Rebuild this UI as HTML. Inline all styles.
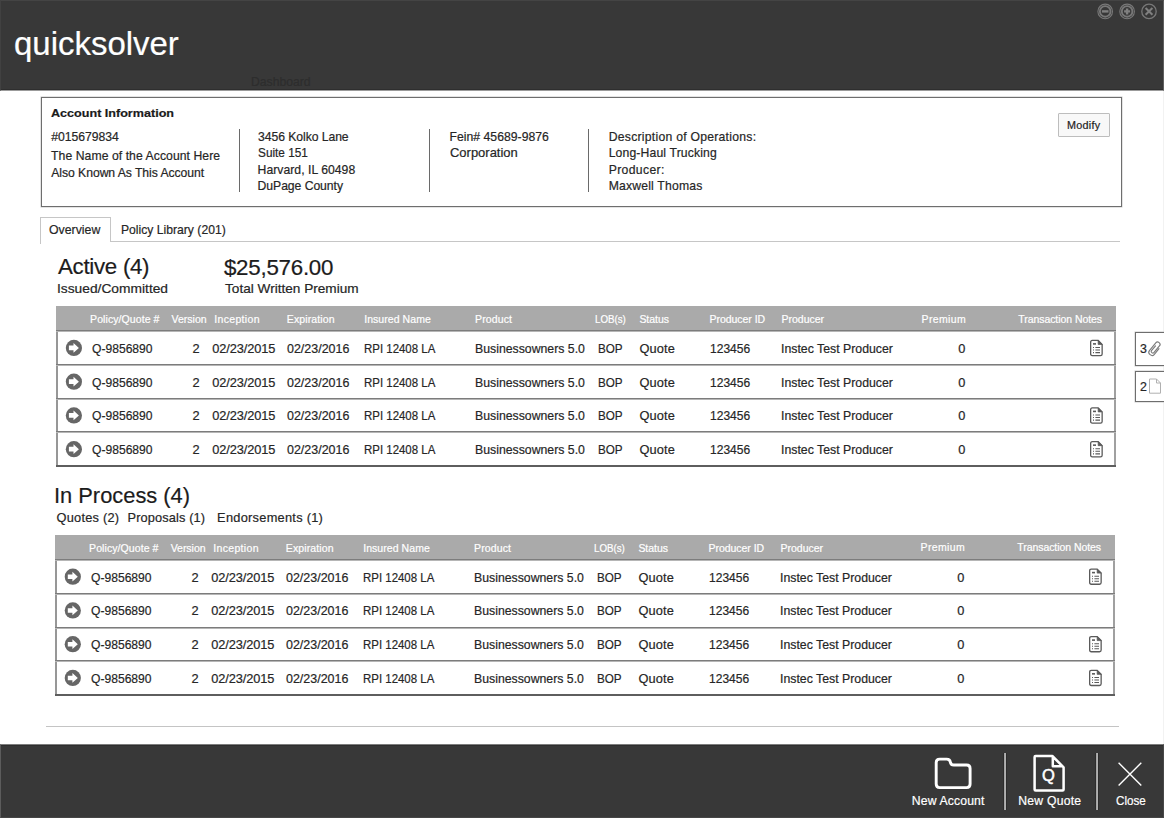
<!DOCTYPE html>
<html lang="en"><head><meta charset="utf-8"><title>quicksolver</title>
<style>
html,body{margin:0;padding:0;}
html{width:1164px;height:818px;overflow:hidden;background:#fff;}
body{width:1164px;height:818px;position:relative;overflow:hidden;background:#fff;font-family:"Liberation Sans",sans-serif;}
.t{position:absolute;white-space:nowrap;line-height:1;font-family:"Liberation Sans",sans-serif;-webkit-text-stroke:0.2px currentColor;transform-origin:0 0;}
.a{position:absolute;}
#hdr{left:0;top:0;width:1164px;height:91px;background:#383838;box-sizing:border-box;border-top:1px solid #444;border-left:1px solid #414141;border-right:1px solid #606060;border-bottom:1px solid #9b9b9b;box-shadow:inset 0 -1px 0 #2e2e2e;}
#ftr{left:0;top:744px;width:1164px;height:74px;background:#383838;box-sizing:border-box;border-top:1px solid #7d7d7d;border-right:1px solid #484848;border-left:1px solid #5c5c5c;border-bottom:1px solid #464646;box-shadow:inset 0 1px 0 #2e2e2e;}
#redge{left:1163px;top:91px;width:1px;height:653px;background:#f2f2f2;}
#acct{left:41px;top:97px;width:1081px;height:110px;box-sizing:border-box;border:1px solid #6e6e6e;box-shadow:0 0 0 0.5px #c9c9c9;}
.vs{width:1px;background:#6a6a6a;top:129px;height:63px;}
#mod{left:1058px;top:113px;width:52px;height:24px;box-sizing:border-box;border:1px solid #bdbdbd;background:#f8f8f8;border-radius:1px;}
#tabline{left:110px;top:241px;width:1010px;height:1px;background:#c6c6c6;}
#tab{left:40px;top:217px;width:71px;height:27px;box-sizing:border-box;border-left:1px solid #c6c6c6;border-top:1px solid #c6c6c6;}
#tabr{left:110px;top:217px;width:1px;height:25px;background:#c6c6c6;}
.tbl{left:56px;width:1060px;}
.th{left:0;top:0;width:1060px;height:24px;background:#aaa;}
.tb{left:0;top:24px;width:1060px;height:136px;box-sizing:border-box;border-left:2px solid #979797;border-right:2px solid #a0a0a0;}
.rl{left:0;width:1060px;height:2px;background:linear-gradient(#7c7c7c 0 50%,#b6b6b6 50% 100%);}
.sb{left:1135px;width:29px;box-sizing:border-box;border:1px solid #6e6e6e;border-right:none;box-shadow:0 0 0 0.5px #ccc;background:#fff;}
#hr{left:46px;top:726px;width:1073px;height:1px;background:#c4c4c4;}
.fs{width:4px;top:753px;height:57px;background:linear-gradient(90deg,#2c2c2c 0 25%,#a4a4a4 25% 50%,#b0b0b0 50% 75%,#2c2c2c 75% 100%);}
svg{position:absolute;overflow:visible;}

</style></head>
<body>
<div class="a" id="hdr"></div>
<svg style="left:1096px;top:3px" width="62" height="18" viewBox="1096 3 62 18">
 <g fill="none" stroke="#787878">
  <circle cx="1105.2" cy="11.4" r="7.3" stroke-width="1.1"/><circle cx="1105.2" cy="11.4" r="5.3" stroke-width="1.9"/>
  <circle cx="1127.1" cy="11.4" r="7.3" stroke-width="1.1"/><circle cx="1127.1" cy="11.4" r="5.3" stroke-width="1.9"/>
  <circle cx="1149" cy="11.4" r="7.2" stroke-width="1.3"/>
 </g>
 <g stroke="#808080" fill="none">
  <path d="M1101.9 11.4H1108.5" stroke-width="2.4"/>
  <path d="M1124.1 11.4H1130.1M1127.1 8.4V14.4" stroke-width="2.4"/>
  <path d="M1145.6 8L1152.4 14.8M1152.4 8L1145.6 14.8" stroke-width="2"/>
 </g>
</svg>
<div class="a" id="acct"></div>
<div class="a vs" style="left:239px"></div>
<div class="a vs" style="left:429px"></div>
<div class="a vs" style="left:588px"></div>
<div class="a" id="mod"></div>
<div class="a" id="tabline"></div>
<div class="a" id="tab"></div><div class="a" id="tabr"></div>

<!-- table 1 -->
<div class="a tbl" style="top:306px;height:162px">
 <div class="a th"></div>
 <div class="a tb"></div>
 <div class="a rl" style="top:24px"></div>
 <div class="a rl" style="top:58px"></div>
 <div class="a rl" style="top:92px"></div>
 <div class="a rl" style="top:125px"></div>
 <div class="a rl" style="top:159px;background:#5e5e5e"></div>
</div>
<!-- table 2 -->
<div class="a tbl" style="left:55px;top:535px;height:162px">
 <div class="a th"></div>
 <div class="a tb"></div>
 <div class="a rl" style="top:24px"></div>
 <div class="a rl" style="top:58px"></div>
 <div class="a rl" style="top:92px"></div>
 <div class="a rl" style="top:125px"></div>
 <div class="a rl" style="top:159px;background:#5e5e5e"></div>
</div>

<svg style="left:0;top:0" width="1164" height="818" viewBox="0 0 1164 818">
 <g transform="translate(73.9 347.90)"><circle cx="0" cy="0" r="8.1" fill="#666"/><path d="M-5 -2.3H-0.4V-4.9L5 0L-0.4 4.9V2.3H-5Z" fill="#fff"/></g>
 <g transform="translate(73.9 381.65)"><circle cx="0" cy="0" r="8.1" fill="#666"/><path d="M-5 -2.3H-0.4V-4.9L5 0L-0.4 4.9V2.3H-5Z" fill="#fff"/></g>
 <g transform="translate(73.9 415.40)"><circle cx="0" cy="0" r="8.1" fill="#666"/><path d="M-5 -2.3H-0.4V-4.9L5 0L-0.4 4.9V2.3H-5Z" fill="#fff"/></g>
 <g transform="translate(73.9 449.15)"><circle cx="0" cy="0" r="8.1" fill="#666"/><path d="M-5 -2.3H-0.4V-4.9L5 0L-0.4 4.9V2.3H-5Z" fill="#fff"/></g>
 <g transform="translate(72.8 576.70)"><circle cx="0" cy="0" r="8.1" fill="#666"/><path d="M-5 -2.3H-0.4V-4.9L5 0L-0.4 4.9V2.3H-5Z" fill="#fff"/></g>
 <g transform="translate(72.8 610.45)"><circle cx="0" cy="0" r="8.1" fill="#666"/><path d="M-5 -2.3H-0.4V-4.9L5 0L-0.4 4.9V2.3H-5Z" fill="#fff"/></g>
 <g transform="translate(72.8 644.20)"><circle cx="0" cy="0" r="8.1" fill="#666"/><path d="M-5 -2.3H-0.4V-4.9L5 0L-0.4 4.9V2.3H-5Z" fill="#fff"/></g>
 <g transform="translate(72.8 677.95)"><circle cx="0" cy="0" r="8.1" fill="#666"/><path d="M-5 -2.3H-0.4V-4.9L5 0L-0.4 4.9V2.3H-5Z" fill="#fff"/></g>
 <g transform="translate(1090 339.80)" fill="none" stroke="#5a5a5a" stroke-width="1.3"><path d="M2.3 0.65H8.2L12.15 4.6V14.1Q12.15 15.75 10.5 15.75H2.3Q0.65 15.75 0.65 14.1V2.3Q0.65 0.65 2.3 0.65Z"/><path d="M8.2 0.65V4.6H12.15Z" fill="#5a5a5a" stroke-width="0.8"/><path d="M3 4.1H6" stroke-width="1.6"/><path d="M5.4 7.7H10M5.4 10.2H10M5.4 12.8H10" stroke-width="1.1"/><path d="M3 7.7H4M3 10.2H4M3 12.8H4" stroke-width="1.1"/></g>
 <g transform="translate(1090 407.30)" fill="none" stroke="#5a5a5a" stroke-width="1.3"><path d="M2.3 0.65H8.2L12.15 4.6V14.1Q12.15 15.75 10.5 15.75H2.3Q0.65 15.75 0.65 14.1V2.3Q0.65 0.65 2.3 0.65Z"/><path d="M8.2 0.65V4.6H12.15Z" fill="#5a5a5a" stroke-width="0.8"/><path d="M3 4.1H6" stroke-width="1.6"/><path d="M5.4 7.7H10M5.4 10.2H10M5.4 12.8H10" stroke-width="1.1"/><path d="M3 7.7H4M3 10.2H4M3 12.8H4" stroke-width="1.1"/></g>
 <g transform="translate(1090 441.05)" fill="none" stroke="#5a5a5a" stroke-width="1.3"><path d="M2.3 0.65H8.2L12.15 4.6V14.1Q12.15 15.75 10.5 15.75H2.3Q0.65 15.75 0.65 14.1V2.3Q0.65 0.65 2.3 0.65Z"/><path d="M8.2 0.65V4.6H12.15Z" fill="#5a5a5a" stroke-width="0.8"/><path d="M3 4.1H6" stroke-width="1.6"/><path d="M5.4 7.7H10M5.4 10.2H10M5.4 12.8H10" stroke-width="1.1"/><path d="M3 7.7H4M3 10.2H4M3 12.8H4" stroke-width="1.1"/></g>
 <g transform="translate(1089 568.50)" fill="none" stroke="#5a5a5a" stroke-width="1.3"><path d="M2.3 0.65H8.2L12.15 4.6V14.1Q12.15 15.75 10.5 15.75H2.3Q0.65 15.75 0.65 14.1V2.3Q0.65 0.65 2.3 0.65Z"/><path d="M8.2 0.65V4.6H12.15Z" fill="#5a5a5a" stroke-width="0.8"/><path d="M3 4.1H6" stroke-width="1.6"/><path d="M5.4 7.7H10M5.4 10.2H10M5.4 12.8H10" stroke-width="1.1"/><path d="M3 7.7H4M3 10.2H4M3 12.8H4" stroke-width="1.1"/></g>
 <g transform="translate(1089 636.00)" fill="none" stroke="#5a5a5a" stroke-width="1.3"><path d="M2.3 0.65H8.2L12.15 4.6V14.1Q12.15 15.75 10.5 15.75H2.3Q0.65 15.75 0.65 14.1V2.3Q0.65 0.65 2.3 0.65Z"/><path d="M8.2 0.65V4.6H12.15Z" fill="#5a5a5a" stroke-width="0.8"/><path d="M3 4.1H6" stroke-width="1.6"/><path d="M5.4 7.7H10M5.4 10.2H10M5.4 12.8H10" stroke-width="1.1"/><path d="M3 7.7H4M3 10.2H4M3 12.8H4" stroke-width="1.1"/></g>
 <g transform="translate(1089 669.75)" fill="none" stroke="#5a5a5a" stroke-width="1.3"><path d="M2.3 0.65H8.2L12.15 4.6V14.1Q12.15 15.75 10.5 15.75H2.3Q0.65 15.75 0.65 14.1V2.3Q0.65 0.65 2.3 0.65Z"/><path d="M8.2 0.65V4.6H12.15Z" fill="#5a5a5a" stroke-width="0.8"/><path d="M3 4.1H6" stroke-width="1.6"/><path d="M5.4 7.7H10M5.4 10.2H10M5.4 12.8H10" stroke-width="1.1"/><path d="M3 7.7H4M3 10.2H4M3 12.8H4" stroke-width="1.1"/></g>
</svg>

<div class="a" id="redge"></div>
<div class="a sb" style="top:332px;height:34px"></div>
<div class="a sb" style="top:371px;height:31px"></div>
<svg style="left:1146px;top:338px" width="18" height="22" viewBox="1146 338 18 22">
 <g transform="translate(1154.9 348.8) rotate(-50.4) scale(1.04 1.18)">
  <path d="M2.6 2.6L-4.7 2.6A2.6 2.6 0 0 1 -4.7 -2.6L5.2 -2.6A2 2 0 0 1 5.2 1.4L-3.5 1.4A1.3 1.3 0 0 1 -3.5 -1.2L2.6 -1.2" fill="none" stroke="#7c7c7c" stroke-width="1" stroke-linecap="round"/>
 </g>
</svg>
<svg style="left:1148px;top:377px" width="16" height="18" viewBox="1148 377 16 18">
 <path d="M1149.5 379H1156.5L1160.5 383V393.2H1149.5ZM1156.5 379V383H1160.5" fill="none" stroke="#b0b0b0" stroke-width="1"/>
</svg>

<div class="a" id="hr"></div>
<div class="a" id="ftr"></div>
<div class="a fs" style="left:1003px"></div>
<div class="a fs" style="left:1095px"></div>
<svg style="left:900px;top:744px" width="264" height="74" viewBox="900 744 264 74">
 <g fill="none" stroke="#fff" stroke-width="2.2" stroke-linejoin="round">
  <path d="M939.7 759.1H946.6Q949.9 759.1 950.3 762Q950.7 765 953.8 765H966.6Q970.1 765 970.1 768.5V784.1Q970.1 787.6 966.6 787.6H939.7Q936.2 787.6 936.2 784.1V762.6Q936.2 759.1 939.7 759.1Z" stroke-width="2.9"/>
  <path d="M1036 756H1052.3L1063.6 767.3V789.5Q1063.6 790.5 1062.6 790.5H1035.6Q1034.6 790.5 1034.6 789.5V757Q1034.6 756 1035.6 756Z M1052.8 756.5V766.3H1063" stroke-width="2.5"/>
 </g>
 <path d="M1118.6 762.8L1141.3 785.4M1141.3 762.8L1118.6 785.4" stroke="#fff" stroke-width="1.4" fill="none"/>
</svg>

<div class="t" id="t0" style="left:13.6px;top:26.00px;font-size:34px;color:#fff;transform:scaleX(0.9691);">quicksolver</div>
<div class="t" id="t1" style="left:250.6px;top:76.00px;font-size:12.6px;color:#2d2d2d;transform:scaleX(0.9671);">Dashboard</div>
<div class="t" id="t2" style="left:51.1px;top:108.00px;font-size:11.8px;color:#1a1a1a;font-weight:700;transform:scaleX(1.0664);">Account Information</div>
<div class="t" id="t3" style="left:51.3px;top:131.00px;font-size:12.2px;color:#262626;letter-spacing:-0.031px;">#015679834</div>
<div class="t" id="t4" style="left:51.1px;top:150.00px;font-size:12.2px;color:#262626;letter-spacing:0.060px;">The Name of the Account Here</div>
<div class="t" id="t5" style="left:51.3px;top:167.00px;font-size:12.2px;color:#262626;letter-spacing:-0.056px;">Also Known As This Account</div>
<div class="t" id="t6" style="left:258.1px;top:131.00px;font-size:12.2px;color:#262626;letter-spacing:-0.067px;">3456 Kolko Lane</div>
<div class="t" id="t7" style="left:258.1px;top:147.00px;font-size:12.2px;color:#262626;transform:scaleX(0.9692);">Suite 151</div>
<div class="t" id="t8" style="left:257.6px;top:164.00px;font-size:12.2px;color:#262626;letter-spacing:0.031px;">Harvard, IL 60498</div>
<div class="t" id="t9" style="left:257.6px;top:180.00px;font-size:12.2px;color:#262626;letter-spacing:-0.054px;">DuPage County</div>
<div class="t" id="t10" style="left:449.5px;top:131.00px;font-size:12.2px;color:#262626;letter-spacing:0.031px;">Fein# 45689-9876</div>
<div class="t" id="t11" style="left:449.7px;top:147.00px;font-size:12.2px;color:#262626;transform:scaleX(1.0642);">Corporation</div>
<div class="t" id="t12" style="left:608.7px;top:131.00px;font-size:12.2px;color:#262626;letter-spacing:0.258px;">Description of Operations:</div>
<div class="t" id="t13" style="left:608.7px;top:147.00px;font-size:12.2px;color:#262626;letter-spacing:0.142px;">Long-Haul Trucking</div>
<div class="t" id="t14" style="left:608.7px;top:164.00px;font-size:12.2px;color:#262626;letter-spacing:0.357px;">Producer:</div>
<div class="t" id="t15" style="left:608.7px;top:180.00px;font-size:12.2px;color:#262626;letter-spacing:0.183px;">Maxwell Thomas</div>
<div class="t" id="t16" style="left:1067.1px;top:120.00px;font-size:10.8px;color:#222;letter-spacing:0.227px;">Modify</div>
<div class="t" id="t17" style="left:48.5px;top:224.00px;font-size:12.8px;color:#262626;transform:scaleX(0.9627);">Overview</div>
<div class="t" id="t18" style="left:120.9px;top:224.00px;font-size:12.8px;color:#262626;transform:scaleX(0.9498);">Policy Library (201)</div>
<div class="t" id="t19" style="left:58.0px;top:256.00px;font-size:22.3px;color:#1c1c1c;letter-spacing:-0.291px;">Active (4)</div>
<div class="t" id="t20" style="left:56.7px;top:283.00px;font-size:12.8px;color:#262626;transform:scaleX(1.0767);">Issued/Committed</div>
<div class="t" id="t21" style="left:223.9px;top:257.00px;font-size:22.3px;color:#1c1c1c;letter-spacing:-0.227px;">$25,576.00</div>
<div class="t" id="t22" style="left:224.5px;top:283.00px;font-size:12.8px;color:#262626;transform:scaleX(1.0638);">Total Written Premium</div>
<div class="t" id="t23" style="left:54.2px;top:485.00px;font-size:22.3px;color:#1c1c1c;transform:scaleX(0.9801);">In Process (4)</div>
<div class="t" id="t24" style="left:56.5px;top:512.00px;font-size:12.8px;color:#262626;letter-spacing:0.237px;">Quotes (2)</div>
<div class="t" id="t25" style="left:127.5px;top:512.00px;font-size:12.8px;color:#262626;letter-spacing:0.124px;">Proposals (1)</div>
<div class="t" id="t26" style="left:217.1px;top:512.00px;font-size:12.8px;color:#262626;letter-spacing:0.272px;">Endorsements (1)</div>
<div class="t" id="t27" style="left:90.1px;top:314.00px;font-size:10.5px;color:#fff;letter-spacing:0.077px;">Policy/Quote #</div>
<div class="t" id="t28" style="left:171.5px;top:314.00px;font-size:10.5px;color:#fff;letter-spacing:0.011px;">Version</div>
<div class="t" id="t29" style="left:214.3px;top:314.00px;font-size:10.5px;color:#fff;letter-spacing:0.322px;">Inception</div>
<div class="t" id="t30" style="left:286.8px;top:314.00px;font-size:10.5px;color:#fff;letter-spacing:0.116px;">Expiration</div>
<div class="t" id="t31" style="left:364.2px;top:314.00px;font-size:10.5px;color:#fff;letter-spacing:0.059px;">Insured Name</div>
<div class="t" id="t32" style="left:475.1px;top:314.00px;font-size:10.5px;color:#fff;letter-spacing:0.127px;">Product</div>
<div class="t" id="t33" style="left:594.8px;top:314.00px;font-size:10.5px;color:#fff;transform:scaleX(0.9273);">LOB(s)</div>
<div class="t" id="t34" style="left:639.4px;top:314.00px;font-size:10.5px;color:#fff;letter-spacing:-0.026px;">Status</div>
<div class="t" id="t35" style="left:709.6px;top:314.00px;font-size:10.5px;color:#fff;letter-spacing:-0.048px;">Producer ID</div>
<div class="t" id="t36" style="left:781.6px;top:314.00px;font-size:10.5px;color:#fff;letter-spacing:-0.023px;">Producer</div>
<div class="t" id="t37" style="left:921.6px;top:314.00px;font-size:10.5px;color:#fff;letter-spacing:0.347px;">Premium</div>
<div class="t" id="t38" style="left:1018.3px;top:314.00px;font-size:10.5px;color:#fff;letter-spacing:-0.067px;">Transaction Notes</div>
<div class="t" id="t39" style="left:91.9px;top:343.00px;font-size:12.8px;color:#262626;transform:scaleX(0.9456);">Q-9856890</div>
<div class="t" id="t40" style="left:192.5px;top:343.00px;font-size:12.8px;color:#262626;">2</div>
<div class="t" id="t41" style="left:212.3px;top:343.00px;font-size:12.8px;color:#262626;letter-spacing:-0.113px;">02/23/2015</div>
<div class="t" id="t42" style="left:287.2px;top:343.00px;font-size:12.8px;color:#262626;transform:scaleX(0.9742);">02/23/2016</div>
<div class="t" id="t43" style="left:364.2px;top:343.00px;font-size:12.8px;color:#262626;transform:scaleX(0.8948);">RPI 12408 LA</div>
<div class="t" id="t44" style="left:474.8px;top:343.00px;font-size:12.8px;color:#262626;transform:scaleX(0.9597);">Businessowners 5.0</div>
<div class="t" id="t45" style="left:597.6px;top:343.00px;font-size:12.8px;color:#262626;transform:scaleX(0.9124);">BOP</div>
<div class="t" id="t46" style="left:639.5px;top:343.00px;font-size:12.8px;color:#262626;letter-spacing:0.106px;">Quote</div>
<div class="t" id="t47" style="left:709.6px;top:343.00px;font-size:12.8px;color:#262626;transform:scaleX(0.9409);">123456</div>
<div class="t" id="t48" style="left:780.8px;top:343.00px;font-size:12.8px;color:#262626;transform:scaleX(0.9617);">Instec Test Producer</div>
<div class="t" id="t49" style="left:958.2px;top:343.00px;font-size:12.8px;color:#262626;">0</div>
<div class="t" id="t50" style="left:91.9px;top:377.00px;font-size:12.8px;color:#262626;transform:scaleX(0.9456);">Q-9856890</div>
<div class="t" id="t51" style="left:192.5px;top:377.00px;font-size:12.8px;color:#262626;">2</div>
<div class="t" id="t52" style="left:212.3px;top:377.00px;font-size:12.8px;color:#262626;letter-spacing:-0.113px;">02/23/2015</div>
<div class="t" id="t53" style="left:287.2px;top:377.00px;font-size:12.8px;color:#262626;transform:scaleX(0.9742);">02/23/2016</div>
<div class="t" id="t54" style="left:364.2px;top:377.00px;font-size:12.8px;color:#262626;transform:scaleX(0.8948);">RPI 12408 LA</div>
<div class="t" id="t55" style="left:474.8px;top:377.00px;font-size:12.8px;color:#262626;transform:scaleX(0.9597);">Businessowners 5.0</div>
<div class="t" id="t56" style="left:597.6px;top:377.00px;font-size:12.8px;color:#262626;transform:scaleX(0.9124);">BOP</div>
<div class="t" id="t57" style="left:639.5px;top:377.00px;font-size:12.8px;color:#262626;letter-spacing:0.106px;">Quote</div>
<div class="t" id="t58" style="left:709.6px;top:377.00px;font-size:12.8px;color:#262626;transform:scaleX(0.9409);">123456</div>
<div class="t" id="t59" style="left:780.8px;top:377.00px;font-size:12.8px;color:#262626;transform:scaleX(0.9617);">Instec Test Producer</div>
<div class="t" id="t60" style="left:958.2px;top:377.00px;font-size:12.8px;color:#262626;">0</div>
<div class="t" id="t61" style="left:91.9px;top:410.00px;font-size:12.8px;color:#262626;transform:scaleX(0.9456);">Q-9856890</div>
<div class="t" id="t62" style="left:192.5px;top:410.00px;font-size:12.8px;color:#262626;">2</div>
<div class="t" id="t63" style="left:212.3px;top:410.00px;font-size:12.8px;color:#262626;letter-spacing:-0.113px;">02/23/2015</div>
<div class="t" id="t64" style="left:287.2px;top:410.00px;font-size:12.8px;color:#262626;transform:scaleX(0.9742);">02/23/2016</div>
<div class="t" id="t65" style="left:364.2px;top:410.00px;font-size:12.8px;color:#262626;transform:scaleX(0.8948);">RPI 12408 LA</div>
<div class="t" id="t66" style="left:474.8px;top:410.00px;font-size:12.8px;color:#262626;transform:scaleX(0.9597);">Businessowners 5.0</div>
<div class="t" id="t67" style="left:597.6px;top:410.00px;font-size:12.8px;color:#262626;transform:scaleX(0.9124);">BOP</div>
<div class="t" id="t68" style="left:639.5px;top:410.00px;font-size:12.8px;color:#262626;letter-spacing:0.106px;">Quote</div>
<div class="t" id="t69" style="left:709.6px;top:410.00px;font-size:12.8px;color:#262626;transform:scaleX(0.9409);">123456</div>
<div class="t" id="t70" style="left:780.8px;top:410.00px;font-size:12.8px;color:#262626;transform:scaleX(0.9617);">Instec Test Producer</div>
<div class="t" id="t71" style="left:958.2px;top:410.00px;font-size:12.8px;color:#262626;">0</div>
<div class="t" id="t72" style="left:91.9px;top:444.00px;font-size:12.8px;color:#262626;transform:scaleX(0.9456);">Q-9856890</div>
<div class="t" id="t73" style="left:192.5px;top:444.00px;font-size:12.8px;color:#262626;">2</div>
<div class="t" id="t74" style="left:212.3px;top:444.00px;font-size:12.8px;color:#262626;letter-spacing:-0.113px;">02/23/2015</div>
<div class="t" id="t75" style="left:287.2px;top:444.00px;font-size:12.8px;color:#262626;transform:scaleX(0.9742);">02/23/2016</div>
<div class="t" id="t76" style="left:364.2px;top:444.00px;font-size:12.8px;color:#262626;transform:scaleX(0.8948);">RPI 12408 LA</div>
<div class="t" id="t77" style="left:474.8px;top:444.00px;font-size:12.8px;color:#262626;transform:scaleX(0.9597);">Businessowners 5.0</div>
<div class="t" id="t78" style="left:597.6px;top:444.00px;font-size:12.8px;color:#262626;transform:scaleX(0.9124);">BOP</div>
<div class="t" id="t79" style="left:639.5px;top:444.00px;font-size:12.8px;color:#262626;letter-spacing:0.106px;">Quote</div>
<div class="t" id="t80" style="left:709.6px;top:444.00px;font-size:12.8px;color:#262626;transform:scaleX(0.9409);">123456</div>
<div class="t" id="t81" style="left:780.8px;top:444.00px;font-size:12.8px;color:#262626;transform:scaleX(0.9617);">Instec Test Producer</div>
<div class="t" id="t82" style="left:958.2px;top:444.00px;font-size:12.8px;color:#262626;">0</div>
<div class="t" id="t83" style="left:89.1px;top:543.00px;font-size:10.5px;color:#fff;letter-spacing:0.077px;">Policy/Quote #</div>
<div class="t" id="t84" style="left:170.7px;top:543.00px;font-size:10.5px;color:#fff;letter-spacing:-0.030px;">Version</div>
<div class="t" id="t85" style="left:213.3px;top:543.00px;font-size:10.5px;color:#fff;letter-spacing:0.322px;">Inception</div>
<div class="t" id="t86" style="left:285.8px;top:543.00px;font-size:10.5px;color:#fff;letter-spacing:0.116px;">Expiration</div>
<div class="t" id="t87" style="left:363.2px;top:543.00px;font-size:10.5px;color:#fff;letter-spacing:0.059px;">Insured Name</div>
<div class="t" id="t88" style="left:474.1px;top:543.00px;font-size:10.5px;color:#fff;letter-spacing:0.127px;">Product</div>
<div class="t" id="t89" style="left:593.8px;top:543.00px;font-size:10.5px;color:#fff;transform:scaleX(0.9273);">LOB(s)</div>
<div class="t" id="t90" style="left:638.4px;top:543.00px;font-size:10.5px;color:#fff;letter-spacing:-0.026px;">Status</div>
<div class="t" id="t91" style="left:708.6px;top:543.00px;font-size:10.5px;color:#fff;letter-spacing:-0.048px;">Producer ID</div>
<div class="t" id="t92" style="left:780.6px;top:543.00px;font-size:10.5px;color:#fff;letter-spacing:-0.023px;">Producer</div>
<div class="t" id="t93" style="left:920.6px;top:542.00px;font-size:10.5px;color:#fff;letter-spacing:0.347px;">Premium</div>
<div class="t" id="t94" style="left:1017.3px;top:542.00px;font-size:10.5px;color:#fff;letter-spacing:-0.067px;">Transaction Notes</div>
<div class="t" id="t95" style="left:90.9px;top:572.00px;font-size:12.8px;color:#262626;transform:scaleX(0.9456);">Q-9856890</div>
<div class="t" id="t96" style="left:191.5px;top:572.00px;font-size:12.8px;color:#262626;">2</div>
<div class="t" id="t97" style="left:211.3px;top:572.00px;font-size:12.8px;color:#262626;letter-spacing:-0.113px;">02/23/2015</div>
<div class="t" id="t98" style="left:286.2px;top:572.00px;font-size:12.8px;color:#262626;transform:scaleX(0.9742);">02/23/2016</div>
<div class="t" id="t99" style="left:363.2px;top:572.00px;font-size:12.8px;color:#262626;transform:scaleX(0.8948);">RPI 12408 LA</div>
<div class="t" id="t100" style="left:473.8px;top:572.00px;font-size:12.8px;color:#262626;transform:scaleX(0.9597);">Businessowners 5.0</div>
<div class="t" id="t101" style="left:596.6px;top:572.00px;font-size:12.8px;color:#262626;transform:scaleX(0.9124);">BOP</div>
<div class="t" id="t102" style="left:638.5px;top:572.00px;font-size:12.8px;color:#262626;letter-spacing:0.106px;">Quote</div>
<div class="t" id="t103" style="left:708.6px;top:572.00px;font-size:12.8px;color:#262626;transform:scaleX(0.9409);">123456</div>
<div class="t" id="t104" style="left:779.8px;top:572.00px;font-size:12.8px;color:#262626;transform:scaleX(0.9617);">Instec Test Producer</div>
<div class="t" id="t105" style="left:957.2px;top:572.00px;font-size:12.8px;color:#262626;">0</div>
<div class="t" id="t106" style="left:90.9px;top:605.00px;font-size:12.8px;color:#262626;transform:scaleX(0.9456);">Q-9856890</div>
<div class="t" id="t107" style="left:191.5px;top:605.00px;font-size:12.8px;color:#262626;">2</div>
<div class="t" id="t108" style="left:211.3px;top:605.00px;font-size:12.8px;color:#262626;letter-spacing:-0.113px;">02/23/2015</div>
<div class="t" id="t109" style="left:286.2px;top:605.00px;font-size:12.8px;color:#262626;transform:scaleX(0.9742);">02/23/2016</div>
<div class="t" id="t110" style="left:363.2px;top:605.00px;font-size:12.8px;color:#262626;transform:scaleX(0.8948);">RPI 12408 LA</div>
<div class="t" id="t111" style="left:473.8px;top:605.00px;font-size:12.8px;color:#262626;transform:scaleX(0.9597);">Businessowners 5.0</div>
<div class="t" id="t112" style="left:596.6px;top:605.00px;font-size:12.8px;color:#262626;transform:scaleX(0.9124);">BOP</div>
<div class="t" id="t113" style="left:638.5px;top:605.00px;font-size:12.8px;color:#262626;letter-spacing:0.106px;">Quote</div>
<div class="t" id="t114" style="left:708.6px;top:605.00px;font-size:12.8px;color:#262626;transform:scaleX(0.9409);">123456</div>
<div class="t" id="t115" style="left:779.8px;top:605.00px;font-size:12.8px;color:#262626;transform:scaleX(0.9617);">Instec Test Producer</div>
<div class="t" id="t116" style="left:957.2px;top:605.00px;font-size:12.8px;color:#262626;">0</div>
<div class="t" id="t117" style="left:90.9px;top:639.00px;font-size:12.8px;color:#262626;transform:scaleX(0.9456);">Q-9856890</div>
<div class="t" id="t118" style="left:191.5px;top:639.00px;font-size:12.8px;color:#262626;">2</div>
<div class="t" id="t119" style="left:211.3px;top:639.00px;font-size:12.8px;color:#262626;letter-spacing:-0.113px;">02/23/2015</div>
<div class="t" id="t120" style="left:286.2px;top:639.00px;font-size:12.8px;color:#262626;transform:scaleX(0.9742);">02/23/2016</div>
<div class="t" id="t121" style="left:363.2px;top:639.00px;font-size:12.8px;color:#262626;transform:scaleX(0.8948);">RPI 12408 LA</div>
<div class="t" id="t122" style="left:473.8px;top:639.00px;font-size:12.8px;color:#262626;transform:scaleX(0.9597);">Businessowners 5.0</div>
<div class="t" id="t123" style="left:596.6px;top:639.00px;font-size:12.8px;color:#262626;transform:scaleX(0.9124);">BOP</div>
<div class="t" id="t124" style="left:638.5px;top:639.00px;font-size:12.8px;color:#262626;letter-spacing:0.106px;">Quote</div>
<div class="t" id="t125" style="left:708.6px;top:639.00px;font-size:12.8px;color:#262626;transform:scaleX(0.9409);">123456</div>
<div class="t" id="t126" style="left:779.8px;top:639.00px;font-size:12.8px;color:#262626;transform:scaleX(0.9617);">Instec Test Producer</div>
<div class="t" id="t127" style="left:957.2px;top:639.00px;font-size:12.8px;color:#262626;">0</div>
<div class="t" id="t128" style="left:90.9px;top:673.00px;font-size:12.8px;color:#262626;transform:scaleX(0.9456);">Q-9856890</div>
<div class="t" id="t129" style="left:191.5px;top:673.00px;font-size:12.8px;color:#262626;">2</div>
<div class="t" id="t130" style="left:211.3px;top:673.00px;font-size:12.8px;color:#262626;letter-spacing:-0.113px;">02/23/2015</div>
<div class="t" id="t131" style="left:286.2px;top:673.00px;font-size:12.8px;color:#262626;transform:scaleX(0.9742);">02/23/2016</div>
<div class="t" id="t132" style="left:363.2px;top:673.00px;font-size:12.8px;color:#262626;transform:scaleX(0.8948);">RPI 12408 LA</div>
<div class="t" id="t133" style="left:473.8px;top:673.00px;font-size:12.8px;color:#262626;transform:scaleX(0.9597);">Businessowners 5.0</div>
<div class="t" id="t134" style="left:596.6px;top:673.00px;font-size:12.8px;color:#262626;transform:scaleX(0.9124);">BOP</div>
<div class="t" id="t135" style="left:638.5px;top:673.00px;font-size:12.8px;color:#262626;letter-spacing:0.106px;">Quote</div>
<div class="t" id="t136" style="left:708.6px;top:673.00px;font-size:12.8px;color:#262626;transform:scaleX(0.9409);">123456</div>
<div class="t" id="t137" style="left:779.8px;top:673.00px;font-size:12.8px;color:#262626;transform:scaleX(0.9617);">Instec Test Producer</div>
<div class="t" id="t138" style="left:957.2px;top:673.00px;font-size:12.8px;color:#262626;">0</div>
<div class="t" id="t139" style="left:1140.0px;top:343.00px;font-size:12.4px;color:#262626;">3</div>
<div class="t" id="t140" style="left:1140.0px;top:381.00px;font-size:12.4px;color:#262626;">2</div>
<div class="t" id="t141" style="left:911.8px;top:795.00px;font-size:12.2px;color:#fff;letter-spacing:0.146px;">New Account</div>
<div class="t" id="t142" style="left:1018.2px;top:795.00px;font-size:12.2px;color:#fff;letter-spacing:0.248px;">New Quote</div>
<div class="t" id="t143" style="left:1115.9px;top:795.00px;font-size:12.2px;color:#fff;transform:scaleX(0.9550);">Close</div>
<div class="t" id="t144" style="left:1042.0px;top:767.00px;font-size:16.5px;color:#fff;-webkit-text-stroke:0.5px #fff;">Q</div>
</body></html>
